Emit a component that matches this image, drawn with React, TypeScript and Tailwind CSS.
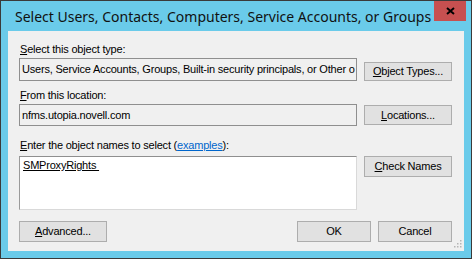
import React from 'react';

const ui = { fontFamily: '"Liberation Sans", Arial, sans-serif' };

function Btn({ children, className = '', accel = true }: { children: string; className?: string; accel?: boolean }) {
  return (
    <button
      className={`flex items-center justify-center border border-[#adadad] bg-[#e1e1e1] text-[11px] tracking-[-0.2px] text-black leading-none ${className}`}
      style={ui}
    >
      <span className={accel ? 'block first-letter:underline' : 'block'}>{children}</span>
    </button>
  );
}

export default function App() {
  return (
    <div className="w-[472px] h-[259px] bg-[#6acbea] border border-[#3a3a3a] flex flex-col overflow-hidden">
      {/* title bar */}
      <div className="h-[30px] flex items-start relative">
        <div
          className="pl-[14px] pt-[5px] text-[14px] text-[#111] whitespace-nowrap"
          style={{ fontFamily: '"Noto Sans", "Open Sans", sans-serif' }}
        >
          Select Users, Contacts, Computers, Service Accounts, or Groups
        </div>
        <div className="absolute right-[5px] top-0 w-[32px] h-[20px] bg-[#c75050] flex items-center justify-center">
          <svg width="9" height="8" viewBox="0 0 9 8">
            <path d="M1 1 L8 7 M8 1 L1 7" stroke="#000" strokeWidth="2" />
          </svg>
        </div>
      </div>

      {/* client area */}
      <div className="mx-[7px] h-[220px] bg-[#f0f0f0] text-[11px] tracking-[-0.2px] text-black relative" style={ui}>
        <div className="pl-[11px] pr-[12px] flex flex-col">
          <div className="mt-[12px] h-[13px] leading-[13px] pl-[1px] first-letter:underline">
            Select this object type:
          </div>
          <div className="mt-[2px] flex gap-[7px]">
            <div className="w-[338px] h-[23px] border border-[#8f8f8f] bg-[#f0f0f0] pl-[2px] leading-[21px] whitespace-nowrap overflow-hidden">
              Users, Service Accounts, Groups, Built-in security principals, or Other o
            </div>
            <Btn className="w-[88px] h-[19px] mt-[4px]">Object Types...</Btn>
          </div>

          <div className="mt-[8px] h-[13px] leading-[13px] pl-[1px] first-letter:underline">
            From this location:
          </div>
          <div className="mt-[2px] flex gap-[7px]">
            <div className="w-[338px] h-[22px] border border-[#8f8f8f] bg-[#f0f0f0] pl-[2px] leading-[20px] whitespace-nowrap overflow-hidden">
              nfms.utopia.novell.com
            </div>
            <Btn className="w-[88px] h-[20px] mt-[1px]">Locations...</Btn>
          </div>

          <div className="mt-[13px] h-[13px] leading-[13px] pl-[1px]">
            <span className="inline-block first-letter:underline">Enter the object names to select (</span>
            <span className="text-[#0066cc] underline">examples</span>):
          </div>
          <div className="mt-[4px] flex gap-[7px]">
            <div className="w-[338px] h-[54px] border border-[#d9d9d9] border-t-[#8f8f8f] border-l-[#9a9a9a] bg-white pl-[3px] pt-[1px] leading-[14px]">
              <span className="underline">SMProxyRights&nbsp;</span>
            </div>
            <Btn className="w-[88px] h-[21px]">Check Names</Btn>
          </div>

          <div className="mt-[11px] flex">
            <Btn className="w-[88px] h-[21px]">Advanced...</Btn>
            <div className="flex-1" />
            <Btn className="w-[74px] h-[21px]" accel={false}>OK</Btn>
            <Btn className="w-[74px] h-[21px] ml-[7px]" accel={false}>Cancel</Btn>
          </div>
        </div>
        {/* size grip */}
        <svg className="absolute right-[2px] bottom-[3px]" width="8" height="8" viewBox="0 0 8 8">
          {[[6, 0], [6, 3], [3, 3], [6, 6], [3, 6], [0, 6]].map(([x, y], i) => (
            <rect key={i} x={x} y={y} width="1.5" height="1.5" fill="#b5b5b5" />
          ))}
        </svg>
      </div>
    </div>
  );
}
